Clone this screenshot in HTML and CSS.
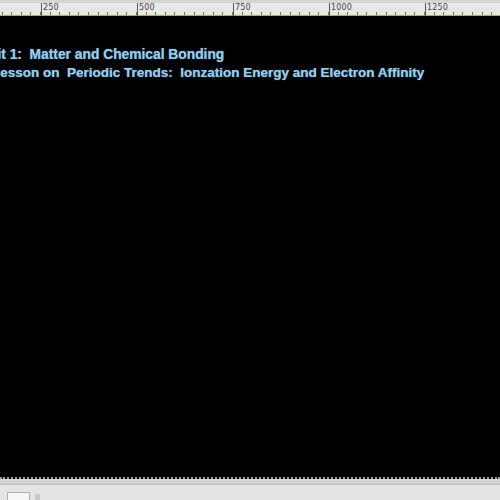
FILE: index.html
```html
<!DOCTYPE html>
<html>
<head>
<meta charset="utf-8">
<link rel="stylesheet" href="styles.css">
</head>
<body>
<div class="window">
  <div class="ruler">
    <div class="ruler-lead"></div>
    <div class="seg"><span>250</span></div>
    <div class="seg"><span>500</span></div>
    <div class="seg"><span>750</span></div>
    <div class="seg"><span>1000</span></div>
    <div class="seg"><span>1250</span></div>
  </div>
  <div class="canvas">
    <div class="slide">
      <p class="line l1">Unit 1:&nbsp; Matter and Chemical Bonding</p>
      <p class="line l2">Lesson on&nbsp; Periodic Trends:&nbsp; Ionzation Energy and Electron Affinity</p>
    </div>
  </div>
  <div class="status">
    <div class="status-top"></div>
    <div class="status-bar">
      <div class="field"></div>
      <div class="knob"></div>
    </div>
  </div>
</div>
</body>
</html>
```
FILE: styles.css
```css
html, body {
  margin: 0;
  padding: 0;
  background: #000;
}
.window {
  width: 500px;
  height: 500px;
  display: flex;
  flex-direction: column;
  overflow: hidden;
}
.ruler {
  height: 16px;
  flex: none;
  display: flex;
  background:
    repeating-linear-gradient(to right, transparent 0, transparent 1.6px, #6f6f6f 1.6px, #6f6f6f 2.6px, transparent 2.6px, transparent 9.6px) 0 12px / 100% 3px no-repeat,
    linear-gradient(#a6b04a, #a6b04a) 0 15px / 100% 1px no-repeat,
    linear-gradient(#d4d4d4 0, #d4d4d4 3px, #e9e9e9 3px, #e6e6e6 100%);
  font-family: "DejaVu Sans", sans-serif;
  font-size: 8px;
  color: #444;
}
.ruler-lead {
  width: 41px;
  flex: none;
}
.seg {
  width: 96px;
  flex: none;
  border-left: 1px solid #555;
  box-sizing: border-box;
  margin-top: 3px;
  height: 13px;
}
.seg span {
  display: block;
  padding-left: 1px;
  line-height: 10px;
  letter-spacing: 0.2px;
}
.canvas {
  flex: 1;
  background: #000;
  border-bottom: 2px dotted #9a9a9a;
  overflow: hidden;
}
.slide {
  padding-top: 30px;
}
.line {
  margin: 0;
  font-family: "Liberation Sans", Arial, sans-serif;
  font-weight: bold;
  font-size: 13.5px;
  line-height: 18px;
  color: #8ccff0;
  text-shadow: 0 0 1px rgba(140, 207, 240, 0.8);
  white-space: nowrap;
}
.l1 { margin-left: -21px; font-size: 13.8px; }
.l2 { margin-left: -8px; }
.status {
  height: 21px;
  flex: none;
  background: #dedede;
  display: flex;
  flex-direction: column;
}
.status-top {
  height: 6px;
  background: linear-gradient(#d9d9d9, #cfcfcf 70%, #bdbdbd);
}
.status-bar {
  flex: 1;
  display: flex;
  align-items: flex-end;
  padding-left: 7px;
  gap: 5px;
  background: #e4e4e4;
}
.field {
  width: 21px;
  height: 7px;
  background: #f6f6f6;
  border: 1px solid #b0b0b0;
  border-bottom: none;
}
.knob {
  width: 5px;
  height: 6px;
  background: #c8c8c8;
}
```
